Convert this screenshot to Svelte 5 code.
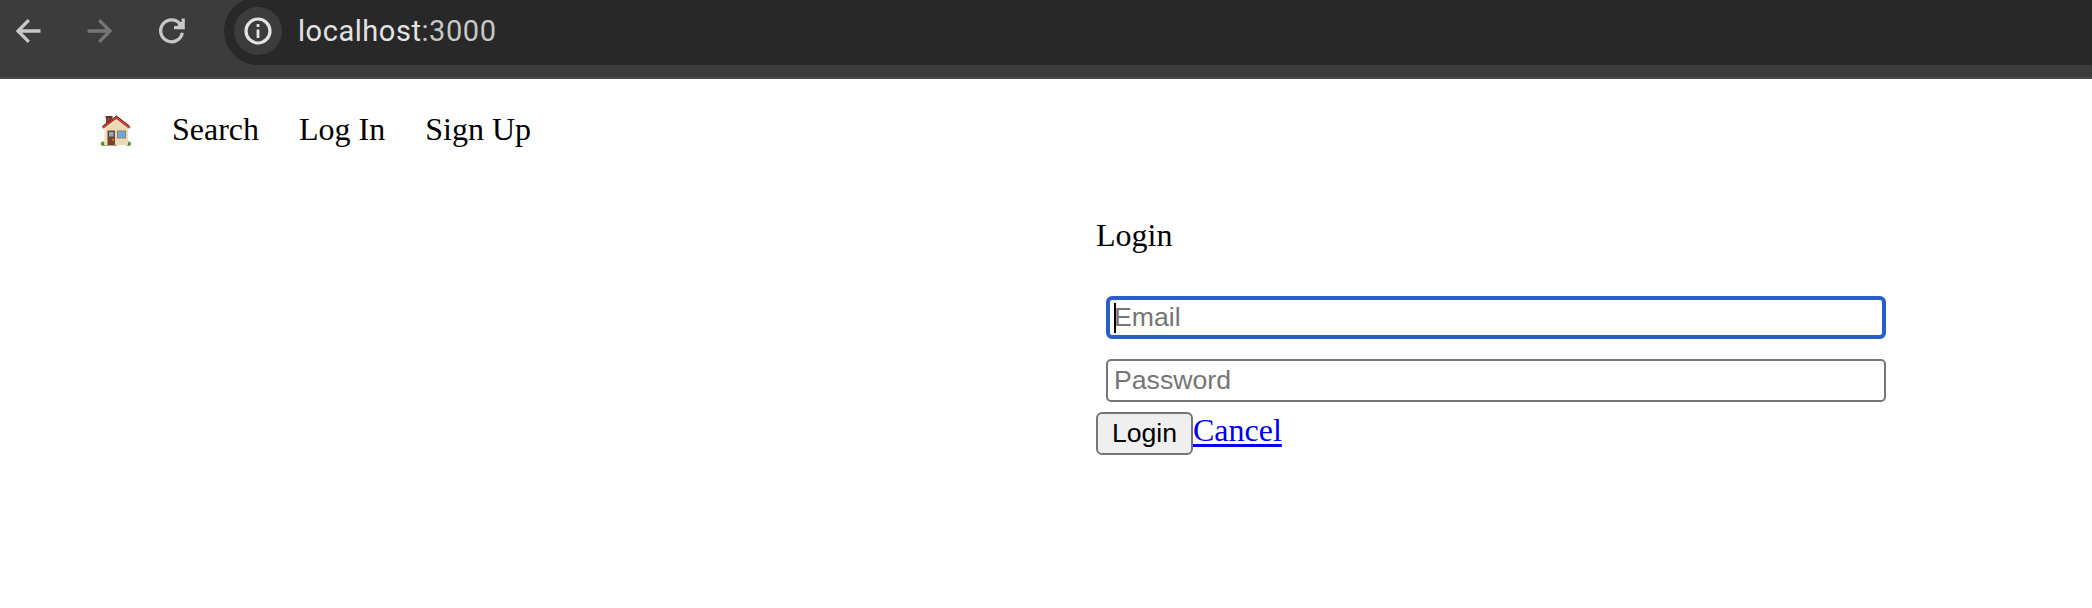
<script>
  const links = ['Search', 'Log In', 'Sign Up'];
</script>

<header class="toolbar">
  <svg class="controls" width="224" height="62" viewBox="0 0 224 62" fill="none" aria-hidden="true">
    <path d="M40.5 31H18.5M28.8 20.2L18 31L28.8 41.8" stroke="#c7c7c7" stroke-width="3.3" />
    <path d="M87.5 31H109.5M99.2 20.2L110 31L99.2 41.8" stroke="#757575" stroke-width="3.3" />
    <path d="M182.3 32.7A10.9 10.9 0 1 1 180.2 24.2" stroke="#c7c7c7" stroke-width="3.3" />
    <path d="M183.2 18.5V27.6H174" stroke="#c7c7c7" stroke-width="3.2" />
    <path d="M178.5 22L184 22V28H177z" fill="#c7c7c7" />
  </svg>
  <div class="omnibox">
    <span class="info">
      <svg width="48" height="48" viewBox="0 0 48 48" fill="none" aria-hidden="true">
        <circle cx="24" cy="24" r="12" stroke="#e3e3e3" stroke-width="3.2" />
        <path d="M24 22.5V31M24 17V20" stroke="#e3e3e3" stroke-width="2.8" />
      </svg>
    </span>
    <span class="url">localhost<span class="port">:3000</span></span>
  </div>
</header>

<nav>
  <svg class="home" width="32" height="32" viewBox="0 0 32 32" aria-hidden="true">
    <ellipse cx="3.6" cy="28.8" rx="2.8" ry="2.2" fill="#5b8f38" />
    <ellipse cx="28.5" cy="28.8" rx="2.6" ry="2.2" fill="#5b8f38" />
    <path d="M6 29.5H17V31H6z" fill="#a9a195" />
    <path d="M6 1.5H12V11H6z" fill="#963c32" />
    <path d="M5.5 1H12.5V3H5.5z" fill="#67332c" />
    <path d="M4.5 12.5L16.5 3L28 12.5V30H4.5z" fill="#ead9b5" />
    <path d="M4.5 12.5L16.5 3L18 4.5L6 14V30H4.5z" fill="#f5e9ce" />
    <path d="M2.5 12.8L16.5 2.5L29.8 12.8" fill="none" stroke="#c64237" stroke-width="2.6" />
    <path d="M3 10.8L16.5 1L29.5 11" fill="none" stroke="#59342c" stroke-width="1" />
    <path d="M7.5 15.5H15V30H7.5z" fill="#794329" />
    <path d="M9 17H13.5V21.5H9z" fill="#78afd9" />
    <path d="M12.5 24H14V25.5H12.5z" fill="#d5b271" />
    <path d="M17 15.5H26V23.5H17z" fill="#8b806a" />
    <path d="M18 16.5H25V22.5H18z" fill="#70a9d8" />
  </svg>
  {#each links as link}
    <span>{link}</span>
  {/each}
</nav>

<main>
  <div class="title">Login</div>
  <form>
    <div class="field active"><i class="caret"></i><span>Email</span></div>
    <div class="field"><span>Password</span></div>
    <div class="actions">
      <button type="button">Login</button><a href="#cancel">Cancel</a>
    </div>
  </form>
</main>

<style>
  :global(body) {
    margin: 0;
    background: #fff;
    overflow: hidden;
  }
  .toolbar {
    box-sizing: border-box;
    height: 79px;
    display: flex;
    align-items: flex-start;
    background: #3c3c3c;
    border-bottom: 2px solid #484848;
    overflow: hidden;
  }
  .controls {
    flex: none;
  }
  .omnibox {
    box-sizing: border-box;
    flex: 1;
    height: 68px;
    margin-top: -3px;
    padding-left: 10px;
    display: flex;
    align-items: center;
    gap: 16px;
    background: #282828;
    border-radius: 34px 0 0 34px;
  }
  .info {
    width: 48px;
    height: 48px;
    border-radius: 50%;
    background: #3c3c3c;
  }
  .info svg {
    display: block;
  }
  .url {
    font: 29px/34px Roboto, sans-serif;
    letter-spacing: 0.55px;
    color: #e3e3e3;
  }
  .port {
    color: #c7c7c7;
  }
  nav {
    display: flex;
    gap: 40px;
    height: 37px;
    margin: 32px 0 0 100px;
    font: 32px/37px 'Liberation Serif', serif;
    color: #000;
  }
  .home {
    margin-top: 4px;
  }
  main {
    width: 800px;
    margin: 69px 0 0 1096px;
    font: 32px/37px 'Liberation Serif', serif;
    color: #000;
  }
  form {
    margin-top: 42px;
  }
  .field {
    box-sizing: border-box;
    display: flex;
    align-items: center;
    width: 780px;
    height: 43px;
    margin: 0 0 20px 10px;
    padding-left: 6px;
    border: 2px solid #767676;
    border-radius: 5px;
    font: 26.667px/30px 'Liberation Sans', sans-serif;
    color: #757575;
  }
  .field span {
    padding-bottom: 2px;
  }
  .field.active {
    border: 4px solid #2960c8;
    border-radius: 6px;
    padding-left: 4px;
  }
  .caret {
    width: 2px;
    height: 30px;
    margin-right: -2px;
    background: #000;
  }
  .actions {
    display: flex;
    align-items: flex-start;
    margin-top: -10px;
  }
  button {
    box-sizing: border-box;
    width: 97px;
    height: 43px;
    padding: 0 0 2px;
    border: 2px solid #767676;
    border-radius: 6px;
    background: #efefef;
    font: 26.667px/30px 'Liberation Sans', sans-serif;
    color: #000;
  }
  a {
    color: #0000ee;
    text-decoration: underline;
    text-decoration-thickness: 3px;
    text-underline-offset: 3px;
  }
</style>
